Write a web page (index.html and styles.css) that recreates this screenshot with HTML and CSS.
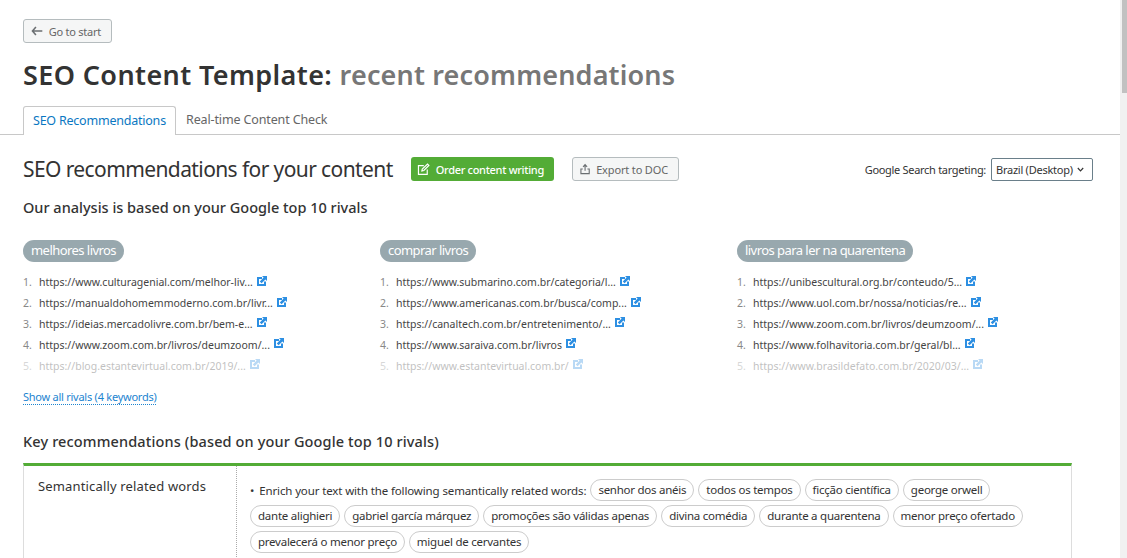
FILE: index.html
```html
<!DOCTYPE html>
<html lang="en">
<head>
  <meta charset="UTF-8" />
  <title>SEO Content Template</title>
  <link rel="stylesheet" href="styles.css">
</head>
<body>
  <div class="page">
    <main>
      <header class="top">
        <button class="btn back-btn" type="button">
          <svg width="12" height="10" viewBox="0 0 12 10"><path d="M5 1 1.5 5 5 9M2 5h9.5" fill="none" stroke="#6b6f72" stroke-width="1.6"/></svg>
          Go to start
        </button>
        <h1>SEO Content Template: <span class="muted">recent recommendations</span></h1>
      </header>

      <nav class="tabs">
        <a class="tab active">SEO Recommendations</a>
        <a class="tab">Real-time Content Check</a>
      </nav>

      <section class="content">
        <div class="head-row">
          <h2>SEO recommendations for your content</h2>
          <button class="btn order-btn" type="button">
            <svg width="13" height="13" viewBox="0 0 13 13"><path d="M7 2.5H1.5v9h9V6.5M5 8l.4-2L10.8.9l1.4 1.4L7 7.5z" fill="none" stroke="#fff" stroke-width="1.2"/></svg>
            Order content writing
          </button>
          <button class="btn export-btn" type="button">
            <svg width="11" height="12" viewBox="0 0 11 12"><path d="M5.5 8V1.5M3.3 3.6 5.5 1.3l2.2 2.3M3 6H1v5h9V6H8" fill="none" stroke="#6b6f72" stroke-width="1.2"/></svg>
            Export to DOC
          </button>
          <div class="target">
            <span>Google Search targeting:</span>
            <div class="select">Brazil (Desktop)
              <svg width="7" height="5" viewBox="0 0 7 5"><path d="M.8 1 3.5 3.8 6.2 1" fill="none" stroke="#333" stroke-width="1.2"/></svg>
            </div>
          </div>
        </div>

        <h3 class="sub-top">Our analysis is based on your Google top 10 rivals</h3>

        <div class="rivals">
          <div class="rival-col">
            <span class="pill">melhores livros</span>
            <ol>
              <li><a>https://www.culturagenial.com/melhor-liv...</a><svg class="ext" viewBox="0 0 10 10"><use href="#ext"/></svg></li>
              <li><a>https://manualdohomemmoderno.com.br/livr...</a><svg class="ext" viewBox="0 0 10 10"><use href="#ext"/></svg></li>
              <li><a>https://ideias.mercadolivre.com.br/bem-e...</a><svg class="ext" viewBox="0 0 10 10"><use href="#ext"/></svg></li>
              <li><a>https://www.zoom.com.br/livros/deumzoom/...</a><svg class="ext" viewBox="0 0 10 10"><use href="#ext"/></svg></li>
              <li class="faded"><a>https://blog.estantevirtual.com.br/2019/...</a><svg class="ext" viewBox="0 0 10 10"><use href="#ext"/></svg></li>
            </ol>
          </div>
          <div class="rival-col">
            <span class="pill">comprar livros</span>
            <ol>
              <li><a>https://www.submarino.com.br/categoria/l...</a><svg class="ext" viewBox="0 0 10 10"><use href="#ext"/></svg></li>
              <li><a>https://www.americanas.com.br/busca/comp...</a><svg class="ext" viewBox="0 0 10 10"><use href="#ext"/></svg></li>
              <li><a>https://canaltech.com.br/entretenimento/...</a><svg class="ext" viewBox="0 0 10 10"><use href="#ext"/></svg></li>
              <li><a>https://www.saraiva.com.br/livros</a><svg class="ext" viewBox="0 0 10 10"><use href="#ext"/></svg></li>
              <li class="faded"><a>https://www.estantevirtual.com.br/</a><svg class="ext" viewBox="0 0 10 10"><use href="#ext"/></svg></li>
            </ol>
          </div>
          <div class="rival-col">
            <span class="pill">livros para ler na quarentena</span>
            <ol>
              <li><a>https://unibescultural.org.br/conteudo/5...</a><svg class="ext" viewBox="0 0 10 10"><use href="#ext"/></svg></li>
              <li><a>https://www.uol.com.br/nossa/noticias/re...</a><svg class="ext" viewBox="0 0 10 10"><use href="#ext"/></svg></li>
              <li><a>https://www.zoom.com.br/livros/deumzoom/...</a><svg class="ext" viewBox="0 0 10 10"><use href="#ext"/></svg></li>
              <li><a>https://www.folhavitoria.com.br/geral/bl...</a><svg class="ext" viewBox="0 0 10 10"><use href="#ext"/></svg></li>
              <li class="faded"><a>https://www.brasildefato.com.br/2020/03/...</a><svg class="ext" viewBox="0 0 10 10"><use href="#ext"/></svg></li>
            </ol>
          </div>
        </div>

        <a class="show-all">Show all rivals (4 keywords)</a>

        <h3 class="sub-key">Key recommendations (based on your Google top 10 rivals)</h3>

        <div class="rec-table">
          <div class="rec-label">Semantically related words</div>
          <div class="rec-body">
            <div class="chips">
              <span class="lead">Enrich your text with the following semantically related words:</span>
              <span class="chip">senhor dos anéis</span>
              <span class="chip">todos os tempos</span>
              <span class="chip">ficção científica</span>
              <span class="chip">george orwell</span>
              <span class="chip">dante alighieri</span>
              <span class="chip">gabriel garcía márquez</span>
              <span class="chip">promoções são válidas apenas</span>
              <span class="chip">divina comédia</span>
              <span class="chip">durante a quarentena</span>
              <span class="chip">menor preço ofertado</span>
              <span class="chip">prevalecerá o menor preço</span>
              <span class="chip">miguel de cervantes</span>
            </div>
            <div class="copy-row">
              <div class="copy-input"></div>
              <div class="copy-btn"></div>
            </div>
          </div>
        </div>
      </section>
    </main>
    <div class="scrollbar"><div class="thumb"></div></div>
  </div>

  <svg width="0" height="0" class="defs">
    <symbol id="ext" viewBox="0 0 10 10">
      <path d="M0 1h5v2H2v5h5V5.5h2V10H0z" fill="#2d8fe2"/>
      <path d="M5 0h5v5L8.4 3.4 4.6 7.2 2.8 5.4l3.8-3.8z" fill="#2d8fe2"/>
    </symbol>
  </svg>
</body>
</html>
```

FILE: styles.css
```css
* { box-sizing: border-box; }
html, body { margin: 0; height: 100%; overflow: hidden; }
body { font-family: "Noto Sans", "Open Sans", sans-serif; color: #333; background: #fff; }
.page { display: flex; height: 558px; overflow: hidden; }
main { flex: 1; min-width: 0; }

.scrollbar { width: 7px; background: #f1f1f1; padding-left: 2px; }
.thumb { height: 93px; background: #c1c1c1; }

.top { padding: 19px 23px 0; }
.btn {
  display: inline-flex; align-items: center;
  height: 24px; padding: 0 10px;
  font: inherit; font-size: 11px;
  white-space: nowrap;
  border-radius: 3px;
  border: 1px solid #b5bcbe;
  background: #f5f6f6;
  color: #666;
}
.back-btn { width: 89px; gap: 6px; padding-left: 7px; letter-spacing: -.25px; }
h1 { margin: 13px 0 0; font-size: 27px; line-height: 38px; font-weight: 600; letter-spacing: .39px; color: #333; }
.muted { color: #777; letter-spacing: .16px; }

.tabs { display: flex; height: 29px; margin-top: 12px; padding-left: 23px; border-bottom: 1px solid #c8c8c8; }
.tab { height: 29px; padding: 0 10px; font-size: 12.5px; line-height: 27px; color: #666; letter-spacing: -.13px; white-space: nowrap; }
.tab.active {
  width: 153px; padding-left: 9px; color: #0a77c2; background: #fff;
  letter-spacing: -.22px;
  border: 1px solid #c8c8c8; border-bottom: none;
  border-radius: 3px 3px 0 0;
}

.content { padding: 0 0 0 23px; }
.head-row { display: flex; align-items: center; height: 24px; margin-top: 22px; padding-right: 27px; }
h2 { margin: 0; width: 370px; font-size: 21px; font-weight: 400; letter-spacing: -.6px; color: #333; white-space: nowrap; }
.order-btn { margin-left: 18px; width: 143px; height: 24px; gap: 6px; padding-left: 6px; background: #53ac36; border: none; color: #fff; font-weight: 500; letter-spacing: -.3px; }
.export-btn { margin-left: 18px; width: 107px; height: 24px; gap: 6px; padding-left: 7px; letter-spacing: -.15px; }
.target { display: flex; align-items: center; gap: 5px; margin-left: auto; font-size: 11px; letter-spacing: -.3px; }
.select {
  display: flex; align-items: center; gap: 4px;
  width: 102px; height: 23px; padding-left: 4px;
  letter-spacing: -.25px;
  border: 1px solid #6a7f8a; border-radius: 2px;
}

h3 { margin: 0; font-size: 14.5px; font-weight: 500; color: #333; }
.sub-top { margin-top: 16px; line-height: 20px; }

.rivals { display: grid; grid-template-columns: repeat(3, 357px); margin-top: 21px; }
.pill {
  display: inline-block; height: 22px; padding: 0 8px;
  background: #98a8ae; color: #fff; border-radius: 11px;
  font-size: 13px; line-height: 21px; letter-spacing: -.55px;
}
ol { list-style: none; counter-reset: rival; margin: 10px 0 0; padding: 0; }
li { counter-increment: rival; display: flex; align-items: center; height: 20.8px; font-size: 10.5px; color: #444; white-space: nowrap; }
li::before { content: counter(rival) "."; width: 16px; color: #888; }
.faded { opacity: .33; }
.ext { width: 10px; height: 10px; margin: -3px 0 0 4px; }
.defs { position: absolute; }

.show-all {
  display: inline-block; margin-top: 13px;
  font-size: 11px; line-height: 15px; color: #1c84d0; letter-spacing: -.25px;
  border-bottom: 1px dotted #1c84d0;
}

.sub-key { margin-top: 25px; line-height: 20px; letter-spacing: .13px; }

.rec-table {
  display: grid; grid-template-columns: 213px 1fr;
  width: 1049px; height: 120px; margin-top: 12px;
  border-top: 3px solid #53ac36;
  border-left: 1px solid #ddd; border-right: 1px solid #ddd;
}
.rec-label { padding: 10px 14px; font-size: 13px; line-height: 20px; letter-spacing: .15px; border-right: 1px dotted #aaa; }
.rec-body { padding: 13px 0 0 13px; }
.chips { display: flex; flex-wrap: wrap; gap: 4px; font-size: 11.5px; width: 790px; letter-spacing: -.25px; }
.lead { height: 22px; line-height: 24px; letter-spacing: -.13px; }
.lead::before { content: "•"; margin-right: 5px; }
.chip {
  height: 22px; padding: 0 7px;
  line-height: 19px; white-space: nowrap;
  border: 1px solid #ccc; border-radius: 11px;
}
.copy-row { display: flex; gap: 15px; margin-top: 5px; }
.copy-input { width: 695px; height: 24px; border: 1px solid #ccc; border-radius: 3px; }
.copy-btn { width: 67px; height: 24px; border: 1px solid #ccc; border-radius: 3px; }
```
